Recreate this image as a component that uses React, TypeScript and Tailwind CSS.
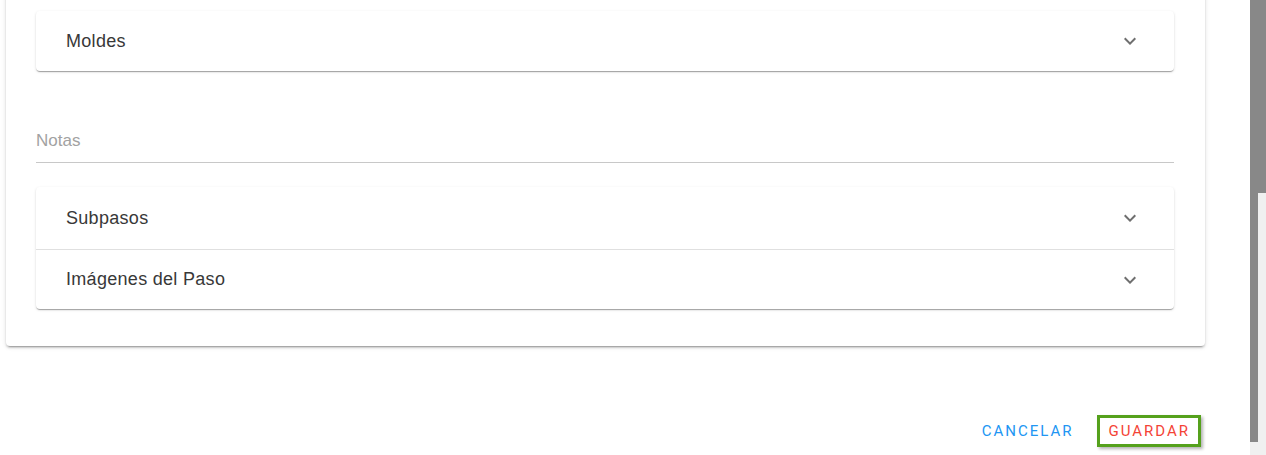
// Accordion row used inside the step form
const ExpandIcon = () => (
  <svg width="24" height="24" viewBox="0 0 24 24" className="fill-[#6f6f6f]">
    <path d="M16.59 8.59 12 13.17 7.41 8.59 6 10l6 6 6-6z" />
  </svg>
);

const AccordionRow = ({ title, divider = false, height }: { title: string; divider?: boolean; height: string }) => (
  <div className={`flex items-center justify-between pl-[30px] pr-[32px] ${height} ${divider ? 'border-t border-[#e0e0e0]' : ''}`}>
    <span className="font-['Liberation_Sans',Arial,sans-serif] text-[18px] tracking-[0.3px] text-[#383838]">{title}</span>
    <ExpandIcon />
  </div>
);

const accordionShadow =
  'shadow-[0_2px_1px_-1px_rgba(0,0,0,0.2),0_1px_1px_0_rgba(0,0,0,0.14),0_1px_3px_0_rgba(0,0,0,0.12)]';

const App = () => {
  return (
    <div className="flex h-[455px] overflow-hidden bg-white font-['Roboto',sans-serif]">
      {/* Main dialog content */}
      <div className="flex-1 flex flex-col">
        <div className="ml-[6px] w-[1199px] -mt-[20px] bg-white rounded-[4px] shadow-[0_3px_1px_-2px_rgba(0,0,0,0.2),0_2px_2px_0_rgba(0,0,0,0.14),0_1px_5px_0_rgba(0,0,0,0.12)] pt-[31px] pb-[37px] pl-[30px] pr-[31px]">
          <div className={`bg-white rounded-[4px] ${accordionShadow}`}>
            <AccordionRow title="Moldes" height="h-[60px]" />
          </div>

          <div className="mt-[58px] border-b border-[#c8c8c8] pb-[9px]">
            <div className="h-[24px] leading-[24px] font-['Liberation_Sans',Arial,sans-serif] text-[17px] text-[#a2a2a2]">Notas</div>
          </div>

          <div className={`mt-[24px] bg-white rounded-[4px] ${accordionShadow}`}>
            <AccordionRow title="Subpasos" height="h-[62px]" />
            <AccordionRow title="Imágenes del Paso" divider height="h-[60px]" />
          </div>
        </div>

        {/* Dialog actions */}
        <div className="ml-[6px] w-[1199px] mt-[69px] flex justify-end items-center pr-[4px] gap-[16px]">
          <button className="px-[8px] h-[32px] text-[15px] tracking-[2px] text-[#2196f3] uppercase">Cancelar</button>
          <button className="h-[32px] px-[8px] border-[3px] border-[#55a11c] bg-white text-[15px] leading-[26px] tracking-[2px] text-[#f44336] uppercase shadow-[2px_2px_3px_rgba(0,0,0,0.3)]">
            Guardar
          </button>
        </div>
      </div>

      {/* Scrollbars */}
      <div className="w-[8px] flex flex-col">
        <div className="h-[442px] bg-[#888]" />
        <div className="flex-1 bg-[#f0f0f0]" />
      </div>
      <div className="w-[8px] flex flex-col">
        <div className="h-[193px] bg-[#888]" />
        <div className="flex-1 bg-[#f0f0f0]" />
      </div>
    </div>
  );
};

export default App;
